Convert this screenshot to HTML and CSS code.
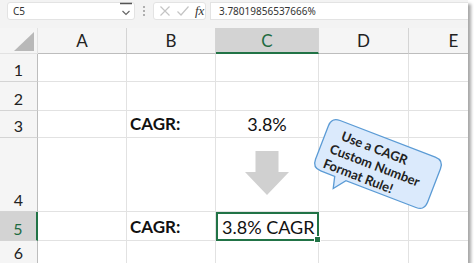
FILE: index.html
```html
<!DOCTYPE html>
<html lang="en">
<head>
    <meta charset="UTF-8">
    <meta name="viewport" content="width=device-width, initial-scale=1.0">
    <title>CAGR Custom Number Format</title>
    <link rel="stylesheet" href="styles.css">
</head>
<body>
    <div class="window">
        <!-- Formula Bar -->
        <div class="formula-bar">
            <div class="name-box">
                <span>C5</span>
                <svg class="name-drop" width="14" height="18" viewBox="0 0 14 18">
                    <path d="M1 1.5 H13" stroke="#555" stroke-width="1.5"/>
                    <path d="M3.5 9 L7 12.5 L10.5 9" fill="none" stroke="#666" stroke-width="1.2"/>
                </svg>
            </div>
            <svg class="bar-dots" width="4" height="12" viewBox="0 0 4 12">
                <circle cx="2" cy="2" r="1" fill="#999"/>
                <circle cx="2" cy="6" r="1" fill="#999"/>
                <circle cx="2" cy="10" r="1" fill="#999"/>
            </svg>
            <div class="fx-box">
                <svg width="12" height="12" viewBox="0 0 12 12">
                    <path d="M1.5 1.5 L10.5 10.5 M10.5 1.5 L1.5 10.5" stroke="#c4c4c4" stroke-width="1.2"/>
                </svg>
                <svg width="14" height="12" viewBox="0 0 14 12">
                    <path d="M1.5 6.5 L5 10 L12.5 1.5" fill="none" stroke="#c4c4c4" stroke-width="1.2"/>
                </svg>
                <span class="fx">fx</span>
            </div>
            <div class="formula-input">3.78019856537666%</div>
        </div>

        <!-- Sheet -->
        <div class="sheet">
            <div class="corner"><span class="corner-tri"></span></div>
            <div class="col-head">A</div>
            <div class="col-head">B</div>
            <div class="col-head selected">C</div>
            <div class="col-head">D</div>
            <div class="col-head">E</div>

            <div class="row-head">1</div>
            <div class="cell"></div><div class="cell"></div><div class="cell"></div><div class="cell"></div><div class="cell"></div>

            <div class="row-head">2</div>
            <div class="cell"></div><div class="cell"></div><div class="cell"></div><div class="cell"></div><div class="cell"></div>

            <div class="row-head">3</div>
            <div class="cell"></div>
            <div class="cell label">CAGR:</div>
            <div class="cell value">3.8%</div>
            <div class="cell"></div><div class="cell"></div>

            <div class="row-head">4</div>
            <div class="cell"></div><div class="cell"></div>
            <div class="cell arrow-cell">
                <svg width="46" height="45" viewBox="0 0 46 45">
                    <path d="M11.5 0 H34.5 V21 H45 L23 44 L1 21 H11.5 Z" fill="#d0d0d0"/>
                </svg>
            </div>
            <div class="cell"></div><div class="cell"></div>

            <div class="row-head selected">5</div>
            <div class="cell"></div>
            <div class="cell label">CAGR:</div>
            <div class="cell active">3.8% CAGR</div>
            <div class="cell"></div><div class="cell"></div>

            <div class="row-head">6</div>
            <div class="cell"></div><div class="cell"></div><div class="cell"></div><div class="cell"></div><div class="cell"></div>
        </div>

        <!-- Callout shape -->
        <svg class="callout" width="160" height="120" viewBox="0 0 160 120">
            <g transform="translate(80 60) rotate(21)">
                <path d="M-51 -27 H51 Q60 -27 60 -18 V18 Q60 27 51 27 H-24 L-33 39 L-36 27 H-51 Q-60 27 -60 18 V-18 Q-60 -27 -51 -27 Z"
                      fill="#dbeafc" stroke="#5b9bd5" stroke-width="1.3"/>
                <text class="callout-text" x="-44" y="-9">Use a CAGR</text>
                <text class="callout-text" x="-50" y="7">Custom Number</text>
                <text class="callout-text" x="-51" y="23">Format Rule!</text>
            </g>
        </svg>
    </div>
</body>
</html>
```
FILE: styles.css
```css
/* General Styles */
body {
    margin: 0;
    padding: 0;
    background-color: #fff;
    font-family: "Lato", "Liberation Sans", sans-serif;
    color: #111;
}

.window {
    position: relative;
    width: 468px;
    height: 263px;
    overflow: hidden;
    background-color: #fff;
    box-shadow: 3px 4px 3px rgba(0, 0, 0, 0.35);
}

/* Formula Bar */
.formula-bar {
    display: flex;
    align-items: center;
    gap: 4px;
    height: 28px;
    padding: 0 0 6px 7px;
    box-sizing: border-box;
    background-color: #f3f3f3;
    font-family: "Noto Sans", "Open Sans", sans-serif;
    font-size: 10px;
    color: #333;
}

.name-box {
    display: flex;
    align-items: center;
    justify-content: space-between;
    width: 128px;
    height: 18px;
    padding: 0 1px 0 5px;
    box-sizing: border-box;
    background-color: #fff;
    border: 1px solid #e3e3e3;
    border-radius: 3px;
}

.bar-dots {
    margin: 0 3px;
}

.fx-box {
    display: flex;
    align-items: center;
    gap: 5px;
    width: 53px;
    height: 18px;
    padding-left: 5px;
    box-sizing: border-box;
    background-color: #fff;
    border: 1px solid #e3e3e3;
    border-radius: 3px;
}

.fx {
    font-family: "Liberation Serif", serif;
    font-style: italic;
    font-size: 13px;
    color: #333;
}

.formula-input {
    flex: 1;
    height: 18px;
    padding-left: 8px;
    box-sizing: border-box;
    line-height: 17px;
    background-color: #fff;
    border: 1px solid #e3e3e3;
    border-right: none;
}

/* Sheet Grid */
.sheet {
    display: grid;
    grid-template-columns: 38px 89px 89px 103px 90px 90px;
    grid-template-rows: 26px 28px 29px 27px 74px 29px 24px;
}

.sheet > div {
    box-sizing: border-box;
    border-right: 1px solid #e2e2e2;
    border-bottom: 1px solid #e2e2e2;
}

.corner {
    display: flex;
    align-items: flex-end;
    justify-content: flex-end;
    padding: 0 3px 2px 0;
    background-color: #f5f5f5;
}

.corner-tri {
    width: 0;
    height: 0;
    border-left: 20px solid transparent;
    border-bottom: 19px solid #b8b8b8;
}

.sheet > .col-head {
    display: flex;
    align-items: center;
    justify-content: center;
    font-size: 17px;
    color: #222;
    background-color: #f5f5f5;
    border-right-color: #d4d4d4;
    border-bottom-color: #bdbdbd;
}

.sheet > .col-head.selected {
    background-color: #d3d3d3;
    border-bottom: 2px solid #217346;
    color: #1e6b41;
}

.sheet > .row-head {
    display: flex;
    align-items: flex-end;
    justify-content: center;
    padding-bottom: 3px;
    font-size: 16px;
    line-height: 16px;
    color: #222;
    background-color: #f5f5f5;
    border-right-color: #bdbdbd;
    border-bottom-color: #d4d4d4;
}

.sheet > .row-head.selected {
    background-color: #d3d3d3;
    border-right: 2px solid #217346;
    color: #1e6b41;
}

.cell {
    display: flex;
    align-items: flex-end;
    padding: 0 3px 2px;
    font-size: 18px;
    line-height: 22px;
    white-space: nowrap;
}

.label {
    font-weight: bold;
    font-size: 17px;
}

.value {
    justify-content: center;
}

.arrow-cell {
    align-items: center;
    justify-content: center;
}

.sheet > .active {
    position: relative;
    border: 2px solid #217346;
    padding: 0 2px 1px 4px;
}

.active::after {
    content: "";
    position: absolute;
    right: -4px;
    bottom: -4px;
    width: 5px;
    height: 5px;
    background-color: #217346;
    border: 1px solid #fff;
}

/* Callout */
.callout {
    position: absolute;
    left: 298px;
    top: 104px;
}

.callout-text {
    font-family: "Lato", "Liberation Sans", sans-serif;
    font-weight: bold;
    font-size: 13px;
    fill: #222;
}
```
